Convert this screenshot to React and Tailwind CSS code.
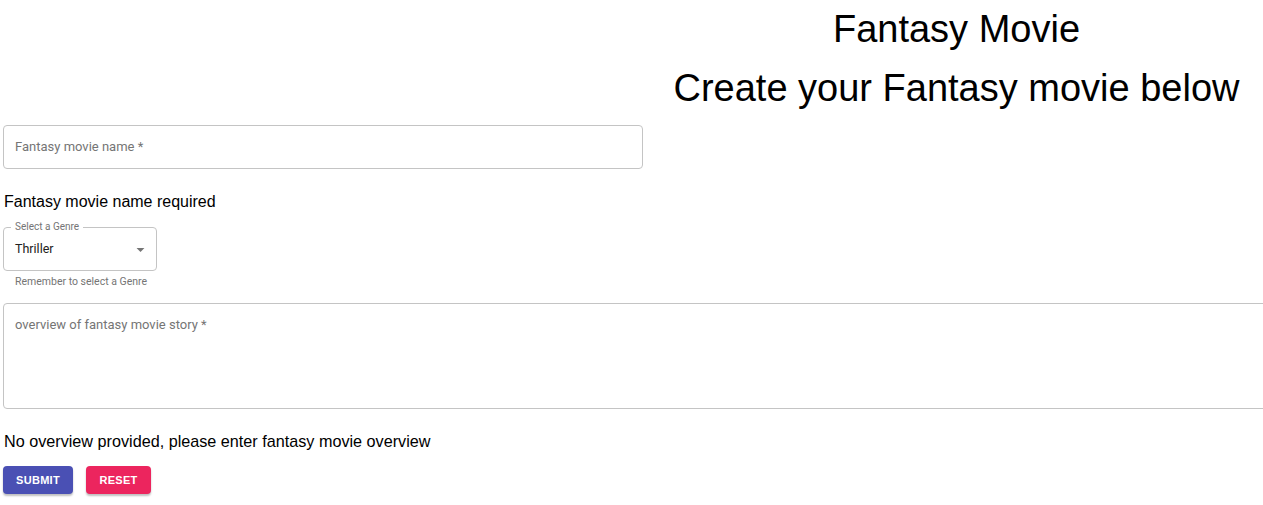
import React from 'react';

const sans = { fontFamily: '"Liberation Sans", Arial, sans-serif' };

const App = () => {
  return (
    <div className="w-[1263px] h-[505px] overflow-hidden bg-white text-black" style={sans}>
      {/* Titres */}
      <div className="pl-[650px] text-center">
        <h1 className="text-[38px] leading-[58px] font-normal">Fantasy Movie</h1>
        <h2 className="text-[38px] leading-[61px] font-normal">Create your Fantasy movie below</h2>
      </div>

      <form className="font-['Roboto',sans-serif]">
        {/* Nom du film */}
        <div className="mt-[6px] ml-[3px] w-[640px] h-[44px] border border-[#c4c4c4] rounded-[4px] flex items-center px-[11px]">
          <span className="text-[13px] text-[#757575]">Fantasy movie name *</span>
        </div>

        <p className="mt-[23px] ml-[4px] text-[16px] leading-[20px]" style={sans}>Fantasy movie name required</p>

        {/* Genre */}
        <div className="relative mt-[15px] ml-[3px] w-[154px] h-[44px] border border-[#c4c4c4] rounded-[4px] flex items-center justify-between pl-[11px] pr-[6px]">
          <span className="absolute left-[7px] -top-[6px] bg-white px-[4px] text-[10px] leading-[10px] text-[#757575]">Select a Genre</span>
          <span className="text-[12.5px] text-[#212121]">Thriller</span>
          <svg width="19" height="19" viewBox="0 0 24 24" className="text-[#757575]">
            <path d="M7 10l5 5 5-5z" fill="currentColor" />
          </svg>
        </div>
        <p className="mt-[5px] ml-[15px] text-[10.5px] leading-[12px] text-[#757575]">Remember to select a Genre</p>

        {/* Résumé */}
        <div className="mt-[15px] ml-[3px] w-[1300px] h-[106px] border border-[#c4c4c4] rounded-[4px] px-[11px] pt-[14px]">
          <span className="block text-[13px] leading-[14px] text-[#757575]">overview of fantasy movie story *</span>
        </div>

        <p className="mt-[22px] ml-[4px] text-[16.2px] leading-[20px]" style={sans}>No overview provided, please enter fantasy movie overview</p>

        {/* Boutons */}
        <div className="mt-[15px] ml-[3px] flex gap-[13px]">
          <button type="button" className="w-[70px] h-[28px] rounded-[4px] bg-[#4a50b4] text-white text-[11px] font-bold tracking-[0.3px] shadow-[0_2px_2px_rgba(0,0,0,0.25)]" style={sans}>SUBMIT</button>
          <button type="button" className="w-[65px] h-[28px] rounded-[4px] bg-[#ec255e] text-white text-[11px] font-bold tracking-[0.3px] shadow-[0_2px_2px_rgba(0,0,0,0.25)]" style={sans}>RESET</button>
        </div>
      </form>
    </div>
  );
};

export default App;
